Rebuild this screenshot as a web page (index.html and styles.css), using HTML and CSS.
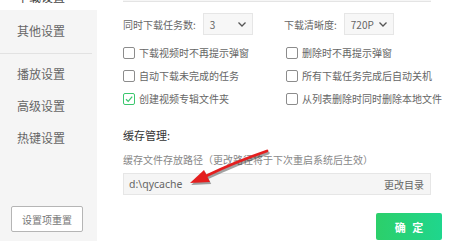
FILE: index.html
```html
<!DOCTYPE html>
<html lang="zh-CN">
<head>
<meta charset="utf-8">
<link rel="stylesheet" href="styles.css">
</head>
<body>
<div class="app">
  <aside class="side">
    <ul class="nav">
      <li class="nav-item active">下载设置</li>
      <li class="nav-item">其他设置</li>
      <li class="divider"></li>
      <li class="nav-item">播放设置</li>
      <li class="nav-item">高级设置</li>
      <li class="nav-item">热键设置</li>
    </ul>
    <button class="reset">设置项重置</button>
  </aside>
  <main class="main">
    <div class="prev-box"></div>
    <div class="selects">
      <div class="field f1">
        <span class="label">同时下载任务数:</span>
        <div class="select"><span>3</span><svg class="chev" viewBox="0 0 8 5"><path d="M0.5 0.5 L4 4 L7.5 0.5" /></svg></div>
      </div>
      <div class="field">
        <span class="label">下载清晰度:</span>
        <div class="select"><span>720P</span><svg class="chev" viewBox="0 0 8 5"><path d="M0.5 0.5 L4 4 L7.5 0.5" /></svg></div>
      </div>
    </div>
    <div class="checks">
      <label class="check"><span class="box"></span>下载视频时不再提示弹窗</label>
      <label class="check"><span class="box"></span>删除时不再提示弹窗</label>
      <label class="check"><span class="box"></span>自动下载未完成的任务</label>
      <label class="check"><span class="box"></span>所有下载任务完成后自动关机</label>
      <label class="check"><span class="box on"><svg viewBox="0 0 10 10"><path d="M2 5.2 L4.2 7.4 L8.2 2.6" /></svg></span>创建视频专辑文件夹</label>
      <label class="check"><span class="box"></span>从列表删除时同时删除本地文件</label>
    </div>
    <div class="cache-title">缓存管理:</div>
    <div class="cache-desc">缓存文件存放路径（更改路径将于下次重启系统后生效）</div>
    <div class="path-box">
      <span class="path">d:\qycache</span>
      <span class="change">更改目录</span>
    </div>
    <div class="footer">
      <button class="ok">确 定</button>
    </div>
  </main>
  <svg class="arrow" width="455" height="241" viewBox="0 0 455 241">
    <g transform="translate(1.2,2)" opacity="0.45">
      <path d="M267 151 Q235 162 206 176" stroke="#333" stroke-width="3" fill="none" stroke-linecap="round"/>
      <polygon points="190,183 204,170 210,182" fill="#333"/>
    </g>
    <path d="M267 151 Q235 162 206 176" stroke="#e41e1e" stroke-width="2.8" fill="none" stroke-linecap="round"/>
    <polygon points="190,183 204,170 210,182" fill="#e41e1e"/>
  </svg>
</div>
</body>
</html>
```

FILE: styles.css
```css
* { box-sizing: border-box; }
html, body { margin: 0; padding: 0; }
body {
  width: 455px;
  height: 241px;
  overflow: hidden;
  background: #fff;
  font-family: "Noto Sans CJK SC", "Noto Sans", sans-serif;
  color: #666;
}
.app {
  position: relative;
  display: flex;
  width: 455px;
  height: 241px;
  overflow: hidden;
}
.side {
  width: 97px;
  flex: none;
  background: #f5f5f5;
  display: flex;
  flex-direction: column;
}
.nav {
  list-style: none;
  margin: 0;
  padding: 0;
}
.nav-item {
  height: 32px;
  line-height: 32px;
  padding-left: 17px;
  font-size: 12px;
  color: #666;
}
.nav-item.active {
  background: #fff;
  height: 26px;
  line-height: 26px;
  margin-top: -16px;
  margin-bottom: 5px;
  color: #444;
}
.divider {
  height: 1px;
  background: #e2e2e2;
  margin: 6px 5px 4px 0;
}
.reset {
  margin: auto 0 9px 11px;
  width: 72px;
  height: 26px;
  background: #fff;
  border: 1px solid #b5b5b5;
  border-radius: 2px;
  font-family: inherit;
  font-size: 10px;
  color: #777;
  padding: 0;
}
.main {
  flex: 1;
  padding-left: 26px;
  display: flex;
  flex-direction: column;
}
.prev-box {
  width: 308px;
  height: 2px;
  background: #f6f6f6;
  border-bottom: 1px solid #e4e4e4;
}
.selects {
  display: flex;
  margin-top: 11px;
  height: 22px;
}
.field {
  display: flex;
  align-items: center;
}
.field.f1 { width: 161px; }
.label {
  font-size: 10px;
  color: #666;
  margin-right: 7px;
}
.select {
  width: 50px;
  height: 22px;
  background: #f7f7f7;
  border: 1px solid #e6e6e6;
  display: flex;
  align-items: center;
  justify-content: space-between;
  padding: 0 6px 0 6px;
  font-size: 10px;
  color: #666;
}
.chev {
  width: 8px;
  height: 5px;
}
.chev path {
  fill: none;
  stroke: #555;
  stroke-width: 1.3;
}
.checks {
  margin-top: 6px;
  display: grid;
  grid-template-columns: 163px 160px;
  grid-auto-rows: 23px;
}
.check {
  display: flex;
  align-items: center;
  font-size: 10px;
  color: #666;
  white-space: nowrap;
}
.box {
  width: 12px;
  height: 12px;
  border: 1px solid #8c8c8c;
  border-radius: 2px;
  background: #fff;
  margin-right: 4px;
  flex: none;
  display: flex;
  align-items: center;
  justify-content: center;
}
.box.on { border-color: #3cc76e; }
.box svg { width: 10px; height: 10px; }
.box svg path {
  fill: none;
  stroke: #3cc76e;
  stroke-width: 1.3;
}
.cache-title {
  margin-top: 17px;
  line-height: 16px;
  font-size: 11px;
  color: #333;
}
.cache-desc {
  margin-top: 10px;
  line-height: 14px;
  font-size: 10px;
  color: #888;
}
.path-box {
  margin-top: 6px;
  width: 308px;
  height: 22px;
  background: #f5f5f5;
  border: 1px solid #e6e6e6;
  display: flex;
  align-items: center;
  justify-content: space-between;
  padding: 0 6px 0 5px;
}
.path {
  font-size: 10.5px;
  color: #666;
  font-family: "Noto Sans", "DejaVu Sans", sans-serif;
}
.change {
  font-size: 10px;
  color: #666;
}
.footer {
  margin-top: 18px;
  display: flex;
  justify-content: flex-end;
  padding-right: 13px;
}
.ok {
  width: 66px;
  height: 27px;
  border: none;
  border-radius: 2px;
  background: linear-gradient(90deg, #2ccf6a, #1fd68d);
  color: #fff;
  font-family: inherit;
  font-weight: bold;
  font-size: 11px;
  letter-spacing: 2px;
  padding: 0 0 0 2px;
}
.arrow {
  position: absolute;
  left: 0;
  top: 0;
  pointer-events: none;
}
```
